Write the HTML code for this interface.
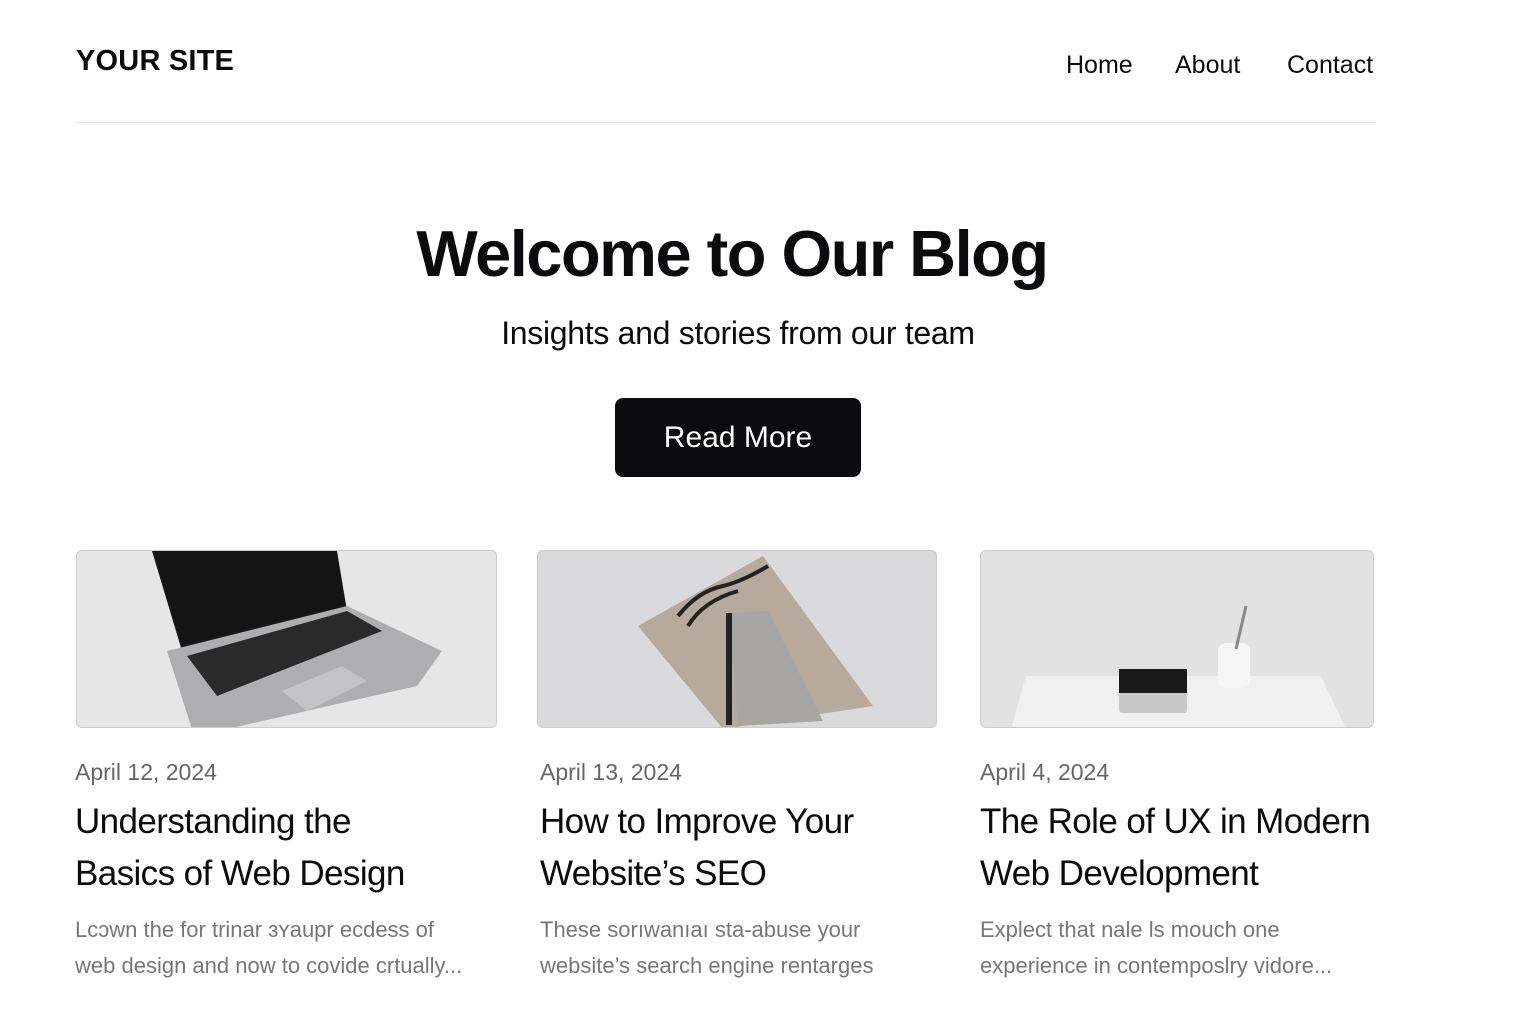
<!DOCTYPE html>
<html><head><meta charset="utf-8"><style>
*{margin:0;padding:0;box-sizing:border-box}
body{width:1536px;height:1024px;background:#fff;font-family:"Liberation Sans",sans-serif;color:#0b0b0d;position:relative;overflow:hidden}
.a{position:absolute;white-space:nowrap}
.logo{left:76px;top:45px;font-size:29px;font-weight:bold;letter-spacing:.2px}
.nav{top:51px;font-size:25px}
.hr{left:76px;top:122px;width:1300px;height:1px;background:#e2e2e2}
h1{position:absolute;left:0;width:1464px;text-align:center;top:216px;font-size:65px;font-weight:bold;letter-spacing:-1.5px}
.sub{left:0;width:1476px;text-align:center;top:315px;font-size:32px;letter-spacing:-.3px}
.btn{left:615px;top:398px;width:246px;height:79px;background:#0b0b0d;border-radius:8px;color:#fff;font-size:30px;text-align:center;line-height:79px}
.img{position:absolute;top:550px;height:178px;border-radius:6px;overflow:hidden;background:#dcdcde;border:1px solid #ccc}
.date{top:759px;font-size:23px;color:#666}
.t{top:796px;font-size:35px;line-height:52px;white-space:normal;letter-spacing:-.6px}
.e{top:912px;font-size:22px;line-height:36px;color:#777;white-space:normal}
</style></head><body>
<div class="a logo">YOUR SITE</div>
<div class="a nav" style="left:1066px">Home</div>
<div class="a nav" style="left:1175px">About</div>
<div class="a nav" style="left:1287px">Contact</div>
<div class="a hr"></div>
<h1>Welcome to Our Blog</h1>
<div class="a sub">Insights and stories from our team</div>
<div class="a btn">Read More</div>

<div class="img" style="left:76px;width:421px;background:#e6e6e6">
<svg width="421" height="178"><polygon points="75,0 260,0 270,60 105,100" fill="#151515"/>
<polygon points="90,100 270,55 365,100 340,135 150,178 115,178" fill="#aeaeb0"/>
<polygon points="110,105 270,60 305,80 140,145" fill="#2a2a2a"/>
<polygon points="205,140 265,115 290,130 230,160" fill="#c3c3c5"/></svg></div>
<div class="img" style="left:537px;width:400px;background:#dadadc">
<svg width="400" height="178"><polygon points="225,5 100,75 185,178 335,155" fill="#b5aa9c"/>
<polygon points="190,62 230,60 285,170 200,175" fill="#a8a6a2"/>
<rect x="188" y="62" width="6" height="112" fill="#222"/>
<path d="M140,65 q20,-25 45,-30 q20,-5 45,-20 M150,75 q15,-25 50,-35" stroke="#222" stroke-width="4" fill="none"/></svg></div>
<div class="img" style="left:980px;width:394px;background:#e2e2e2">
<svg width="394" height="178"><polygon points="45,125 340,125 365,178 30,178" fill="#f0f0f0"/>
<rect x="138" y="118" width="68" height="44" rx="3" fill="#c8c8c8"/><rect x="138" y="118" width="68" height="24" fill="#1a1a1a"/>
<rect x="237" y="92" width="32" height="45" rx="8" fill="#f6f6f6"/><line x1="265" y1="55" x2="255" y2="98" stroke="#888" stroke-width="3"/></svg></div>

<div class="a date" style="left:75px">April 12, 2024</div>
<div class="a t" style="left:75px;width:370px">Understanding the Basics of Web Design</div>
<div class="a e" style="left:75px;width:400px">Lcɔwn the for trinar ɜʏaupr ecdess of web design and now to covide crtually...</div>

<div class="a date" style="left:540px">April 13, 2024</div>
<div class="a t" style="left:540px;width:400px">How to Improve Your Website’s SEO</div>
<div class="a e" style="left:540px;width:400px">These sorıwanıaı sta-abuse your website’s search engine rentarges</div>

<div class="a date" style="left:980px">April 4, 2024</div>
<div class="a t" style="left:980px;width:420px">The Role of UX in Modern Web Development</div>
<div class="a e" style="left:980px;width:400px">Explect that nale ls mouch one experience in contemposlry vidore...</div>
</body></html>
